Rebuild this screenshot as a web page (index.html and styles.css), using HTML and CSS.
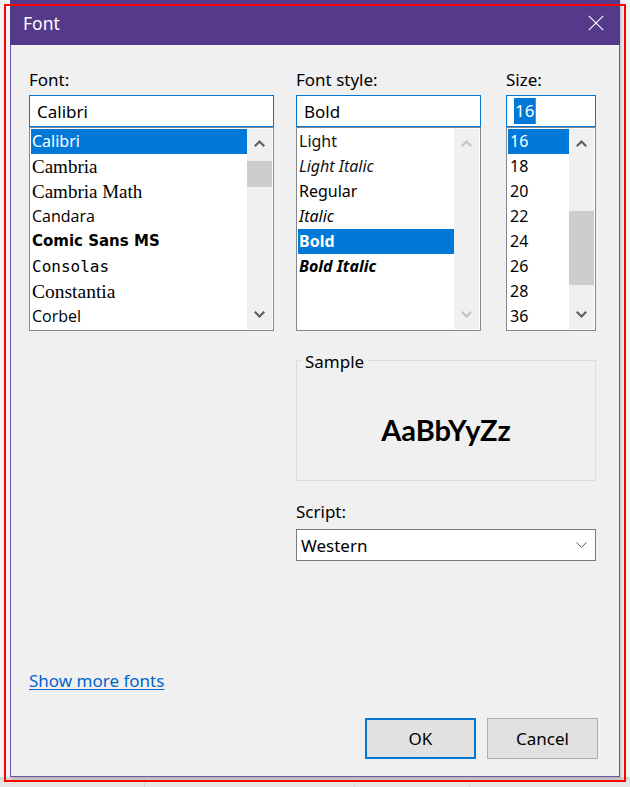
FILE: index.html
```html
<!DOCTYPE html>
<html lang="en">
<head>
<meta charset="utf-8">
<title>Font</title>
<link rel="stylesheet" href="styles.css">
</head>
<body>
<div class="screen">
  <div class="dialog">
    <div class="titlebar">
      <span class="title">Font</span>
      <span class="close">
        <svg width="16" height="16" viewBox="0 0 16 16"><path d="M0.8 0.8L15.2 15.2M15.2 0.8L0.8 15.2" stroke="#ffffff" stroke-width="1.1" fill="none"/></svg>
      </span>
    </div>
    <div class="body">
      <div class="pickers">
        <div class="col col-font">
          <div class="label">Font:</div>
          <div class="input">Calibri</div>
          <div class="list">
            <ul class="items">
              <li class="sel f-calibri">Calibri</li>
              <li class="f-cambria">Cambria</li>
              <li class="f-cambria">Cambria Math</li>
              <li class="f-candara">Candara</li>
              <li class="f-comic">Comic Sans MS</li>
              <li class="f-consolas">Consolas</li>
              <li class="f-constantia">Constantia</li>
              <li class="f-candara">Corbel</li>
            </ul>
            <div class="scrollbar">
              <div class="arrow"><svg width="11" height="7" viewBox="0 0 11 7"><polyline points="0.8,6.2 5.5,1.5 10.2,6.2" fill="none" stroke="#606060" stroke-width="2.2"/></svg></div>
              <div class="track"><div class="thumb thumb-font"></div></div>
              <div class="arrow"><svg width="11" height="7" viewBox="0 0 11 7"><polyline points="0.8,0.8 5.5,5.5 10.2,0.8" fill="none" stroke="#606060" stroke-width="2.2"/></svg></div>
            </div>
          </div>
        </div>
        <div class="col col-style">
          <div class="label">Font style:</div>
          <div class="input">Bold</div>
          <div class="list">
            <ul class="items">
              <li class="s-light">Light</li>
              <li class="s-light-italic">Light Italic</li>
              <li>Regular</li>
              <li class="s-italic">Italic</li>
              <li class="sel s-bold">Bold</li>
              <li class="s-bold-italic">Bold Italic</li>
            </ul>
            <div class="scrollbar">
              <div class="arrow"><svg width="11" height="7" viewBox="0 0 11 7"><polyline points="0.8,6.2 5.5,1.5 10.2,6.2" fill="none" stroke="#c4c4c4" stroke-width="2.2"/></svg></div>
              <div class="track"></div>
              <div class="arrow"><svg width="11" height="7" viewBox="0 0 11 7"><polyline points="0.8,0.8 5.5,5.5 10.2,0.8" fill="none" stroke="#c4c4c4" stroke-width="2.2"/></svg></div>
            </div>
          </div>
        </div>
        <div class="col col-size">
          <div class="label">Size:</div>
          <div class="input"><span class="hl">16</span></div>
          <div class="list">
            <ul class="items size-items">
              <li class="sel">16</li>
              <li>18</li>
              <li>20</li>
              <li>22</li>
              <li>24</li>
              <li>26</li>
              <li>28</li>
              <li>36</li>
            </ul>
            <div class="scrollbar">
              <div class="arrow"><svg width="11" height="7" viewBox="0 0 11 7"><polyline points="0.8,6.2 5.5,1.5 10.2,6.2" fill="none" stroke="#606060" stroke-width="2.2"/></svg></div>
              <div class="track"><div class="thumb thumb-size"></div></div>
              <div class="arrow"><svg width="11" height="7" viewBox="0 0 11 7"><polyline points="0.8,0.8 5.5,5.5 10.2,0.8" fill="none" stroke="#606060" stroke-width="2.2"/></svg></div>
            </div>
          </div>
        </div>
      </div>

      <div class="lower">
        <div class="sample">
          <div class="legend">Sample</div>
          <div class="sample-text">AaBbYyZz</div>
        </div>
        <div class="label">Script:</div>
        <div class="select">
          <span>Western</span>
          <svg width="11" height="6" viewBox="0 0 11 6"><polyline points="0.5,0.5 5.5,5.2 10.5,0.5" fill="none" stroke="#555555" stroke-width="1"/></svg>
        </div>
      </div>

      <div class="footer">
        <a class="more" href="#">Show more fonts</a>
        <div class="buttons">
          <button class="btn ok" type="button">OK</button>
          <button class="btn" type="button">Cancel</button>
        </div>
      </div>
    </div>
  </div>
  <div class="strip">
    <div class="cell c1"></div>
    <div class="cell c2"></div>
    <div class="cell c3"></div>
    <div class="cell c4"></div>
  </div>
  <div class="frame"></div>
</div>
</body>
</html>
```

FILE: styles.css
```css
* { box-sizing: border-box; }

html, body {
  margin: 0;
  padding: 0;
}

body {
  width: 630px;
  height: 787px;
  overflow: hidden;
  background: #f3f3f3;
  font-family: "Noto Sans", "Open Sans", sans-serif;
  font-size: 17px;
  color: #000;
}

.screen {
  position: relative;
  width: 630px;
  height: 787px;
}

.dialog {
  margin-left: 10px;
  width: 610px;
  height: 777px;
  background: #f0f0f0;
  border: 1px solid #6d58a8;
  border-top: 0;
  display: flex;
  flex-direction: column;
  box-shadow: 2px 2px 3px rgba(0, 0, 0, 0.18);
  position: relative;
  z-index: 1;
}

.titlebar {
  height: 45px;
  flex: none;
  background: #553a8c;
  color: #fff;
  display: flex;
  align-items: center;
  justify-content: space-between;
  padding: 0 16px 0 12px;
  margin: 0 -1px;
}

.title {
  font-size: 17.5px;
  line-height: 24px;
  padding-left: 1px;
}

.close {
  display: flex;
  width: 16px;
  height: 16px;
}

.body {
  flex: 1;
  display: flex;
  flex-direction: column;
  padding: 23px 21px 17px 18px;
}

.pickers {
  display: flex;
}

.col-font { width: 245px; }
.col-style { width: 185px; margin-left: 22px; }
.col-size { width: 90px; margin-left: 25px; }

.label {
  height: 24px;
  line-height: 24px;
  margin-bottom: 3px;
  white-space: nowrap;
}

.input {
  height: 32px;
  border: 1px solid #0078d7;
  background: #fff;
  padding-left: 7px;
  display: flex;
  align-items: center;
  font-size: 17px;
}

.hl {
  background: #0078d7;
  color: #fff;
  line-height: 26px;
  padding: 0 1px;
  border-right: 1px solid #c2772c;
}

.list {
  height: 204px;
  border: 1px solid #828790;
  background: #fff;
  padding: 1px;
  display: flex;
}

.items {
  flex: 1;
  list-style: none;
  margin: 0;
  padding: 0;
  min-width: 0;
}

.items li {
  height: 25px;
  line-height: 25px;
  padding-left: 1px;
  white-space: nowrap;
  overflow: hidden;
  font-size: 16px;
}

.items li.sel {
  background: #0078d7;
  color: #fff;
}

.size-items li { padding-left: 2px; }

.scrollbar {
  width: 25px;
  flex: none;
  background: #f0f0f0;
  display: flex;
  flex-direction: column;
}

.arrow {
  height: 29px;
  flex: none;
  display: flex;
  align-items: center;
  justify-content: center;
}

.track { flex: 1; }

.thumb { background: #cdcdcd; }
.thumb-font { margin-top: 3px; height: 26px; }
.thumb-size { margin-top: 53px; height: 74px; }

/* font name previews */
.items .f-calibri { font-family: "Noto Sans", sans-serif; font-size: 16px; }
.items .f-cambria { font-family: "Liberation Serif", serif; font-size: 19px; }
.items .f-candara { font-family: "Open Sans", "Noto Sans", sans-serif; font-size: 16px; }
.items .f-comic { font-family: "DejaVu Sans", sans-serif; font-weight: bold; font-size: 15px; }
.items .f-consolas { font-family: "DejaVu Sans Mono", monospace; font-size: 16px; }
.items .f-constantia { font-family: "Liberation Serif", serif; font-size: 19.5px; }

/* style previews */
.s-light { color: #111; }
.s-light-italic { color: #111; font-style: italic; }
.s-italic { font-style: italic; }
.s-bold { font-weight: bold; }
.s-bold-italic { font-weight: bold; font-style: italic; }

.lower {
  margin-left: 267px;
  width: 300px;
  margin-top: 29px;
}

.sample {
  height: 121px;
  border: 1px solid #dcdcdc;
}

.legend {
  width: fit-content;
  margin: -11px 0 0 4px;
  padding: 0 4px;
  line-height: 24px;
  background: #f0f0f0;
}

.sample-text {
  height: 106px;
  padding-top: 5px;
  display: flex;
  align-items: center;
  justify-content: center;
  font-family: "Lato", "Noto Sans", sans-serif;
  font-weight: bold;
  font-size: 29px;
}

.lower .label { margin-top: 19px; margin-bottom: 5px; }

.select {
  height: 32px;
  border: 1px solid #7a7a7a;
  background: #fff;
  display: flex;
  align-items: center;
  justify-content: space-between;
  padding: 0 8px 0 4px;
}

.footer {
  margin-top: auto;
}

.more {
  display: block;
  width: fit-content;
  line-height: 24px;
  margin-top: 1px;
  color: #0066cc;
  text-decoration: underline;
  text-underline-offset: 2px;
}

.buttons {
  margin-top: 25px;
  display: flex;
  justify-content: flex-end;
  gap: 11px;
}

.btn {
  width: 111px;
  height: 41px;
  padding: 0;
  background: #e1e1e1;
  border: 1px solid #adadad;
  font-family: "Noto Sans", "Open Sans", sans-serif;
  font-size: 17px;
  color: #000;
}

.btn.ok { border: 2px solid #0078d7; }

.strip {
  height: 10px;
  display: flex;
  background: #e6e6e6;
  border-top: 3px solid #d6d6d6;
}

.cell {
  height: 100%;
  border-right: 1px solid #d2d2d2;
}
.c1 { width: 145px; }
.c2 { width: 210px; }
.c3 { width: 115px; }
.c4 { flex: 1; border-right: 0; }

.frame {
  position: absolute;
  left: 4px;
  top: 4px;
  width: 622px;
  height: 778px;
  border: 2px solid #ff0000;
  pointer-events: none;
  z-index: 2;
}
```
